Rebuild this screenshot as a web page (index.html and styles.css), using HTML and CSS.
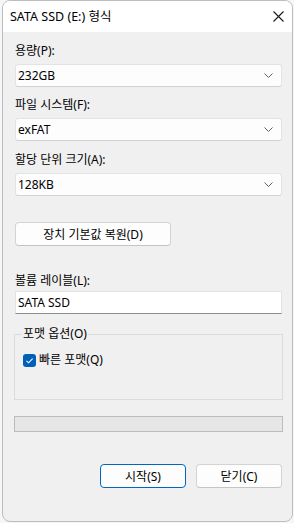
FILE: index.html
```html
<!DOCTYPE html>
<html lang="ko">
<head>
  <meta charset="UTF-8" />
  <meta name="viewport" content="width=device-width, initial-scale=1.0" />
  <title>SATA SSD (E:) 형식</title>
  <link rel="stylesheet" href="styles.css">
</head>
<body>
  <div class="window">
    <div class="titlebar">
      <span class="title">SATA SSD (E:) 형식</span>
      <button class="close" aria-label="닫기">
        <svg width="11" height="11" viewBox="0 0 11 11"><path d="M0.5 0.5 L10.5 10.5 M10.5 0.5 L0.5 10.5" stroke="#1a1a1a" stroke-width="1.1" fill="none"/></svg>
      </button>
    </div>

    <main class="content">
      <div class="field">
        <label>용량(P):</label>
        <div class="select">
          <span>232GB</span>
          <svg class="chevron" width="9" height="5" viewBox="0 0 9 5"><path d="M0.5 0.5 L4.5 4.5 L8.5 0.5" stroke="#606060" stroke-width="1" fill="none"/></svg>
        </div>
      </div>

      <div class="field">
        <label>파일 시스템(F):</label>
        <div class="select">
          <span>exFAT</span>
          <svg class="chevron" width="9" height="5" viewBox="0 0 9 5"><path d="M0.5 0.5 L4.5 4.5 L8.5 0.5" stroke="#606060" stroke-width="1" fill="none"/></svg>
        </div>
      </div>

      <div class="field field-last">
        <label>할당 단위 크기(A):</label>
        <div class="select">
          <span>128KB</span>
          <svg class="chevron" width="9" height="5" viewBox="0 0 9 5"><path d="M0.5 0.5 L4.5 4.5 L8.5 0.5" stroke="#606060" stroke-width="1" fill="none"/></svg>
        </div>
      </div>

      <button class="btn restore">장치 기본값 복원(D)</button>

      <div class="field volume">
        <label>볼륨 레이블(L):</label>
        <div class="textbox">SATA SSD</div>
      </div>

      <fieldset class="options">
        <legend>포맷 옵션(O)</legend>
        <label class="check">
          <span class="box">
            <svg width="13" height="13" viewBox="0 0 13 13"><path d="M3.5 6.8 L5.6 8.8 L9.6 4.6" stroke="#fff" stroke-width="1.1" fill="none"/></svg>
          </span>
          빠른 포맷(Q)
        </label>
      </fieldset>

      <div class="progress"></div>

      <div class="actions">
        <button class="btn primary">시작(S)</button>
        <button class="btn">닫기(C)</button>
      </div>
    </main>
  </div>
</body>
</html>
```

FILE: styles.css
```css
* {
  box-sizing: border-box;
  margin: 0;
  padding: 0;
}
body {
  font-family: 'Noto Sans', 'Noto Sans CJK KR', sans-serif;
  font-size: 12px;
  color: #000;
  background: #f6f6f6;
}
.window {
  margin-left: 2px;
  width: 291px;
  height: 522px;
  border: 1px solid #bdbdbd;
  border-radius: 8px;
  background: #f0f0f0;
  overflow: hidden;
}
.titlebar {
  height: 31px;
  background: #fff;
  display: flex;
  align-items: center;
  justify-content: space-between;
  padding-left: 7px;
}
.title {
  font-size: 12.5px;
  line-height: 16px;
}
.close {
  width: 28px;
  height: 31px;
  border: none;
  background: transparent;
  display: flex;
  align-items: center;
  justify-content: center;
}
.content {
  padding: 11px 10px 0 12px;
}
.field label {
  display: block;
  line-height: 16px;
  height: 16px;
}
.field + .field {
  margin-top: 10px;
}
.field-last {
  margin-top: 11px !important;
}
.select {
  margin-top: 5px;
  height: 23px;
  background: #fdfdfd;
  border: 1px solid #e3e3e3;
  border-bottom-color: #d2d2d2;
  border-radius: 3px;
  display: flex;
  align-items: center;
  justify-content: space-between;
  padding: 0 8px 0 2px;
  width: 267px;
}
.select span {
  line-height: 16px;
}
.btn {
  font-family: inherit;
  font-size: 12px;
  color: #000;
  height: 24px;
  background: #fdfdfd;
  border: 1px solid #d3d3d3;
  border-bottom-color: #c4c4c4;
  border-radius: 4px;
}
.restore {
  display: block;
  width: 156px;
  margin-top: 26px;
}
.volume {
  margin-top: 27px;
}
.textbox {
  margin-top: 2px;
  height: 23px;
  width: 267px;
  background: #fff;
  border: 1px solid #e3e3e3;
  border-bottom-color: #8c8c8c;
  padding-left: 2px;
  line-height: 21px;
}
.options {
  margin: 12px 0 0 -1px;
  width: 269px;
  height: 74px;
  border: 1px solid #dcdcdc;
  padding: 0 8px;
}
.options legend {
  margin-left: -1px;
  padding: 0 1px;
  line-height: 16px;
}
.check {
  display: flex;
  align-items: center;
  gap: 3px;
  margin-top: 10px;
  line-height: 16px;
}
.box {
  width: 13px;
  height: 13px;
  border-radius: 3px;
  background: #005fb8;
  display: flex;
}
.progress {
  margin: 16px 0 0 -1px;
  width: 269px;
  height: 16px;
  background: #e6e6e6;
  border: 1px solid #bcbcbc;
}
.actions {
  margin-top: 32px;
  display: flex;
  justify-content: flex-end;
  gap: 10px;
}
.actions .btn {
  width: 86px;
}
.primary {
  border-color: #0067c0;
}
```
